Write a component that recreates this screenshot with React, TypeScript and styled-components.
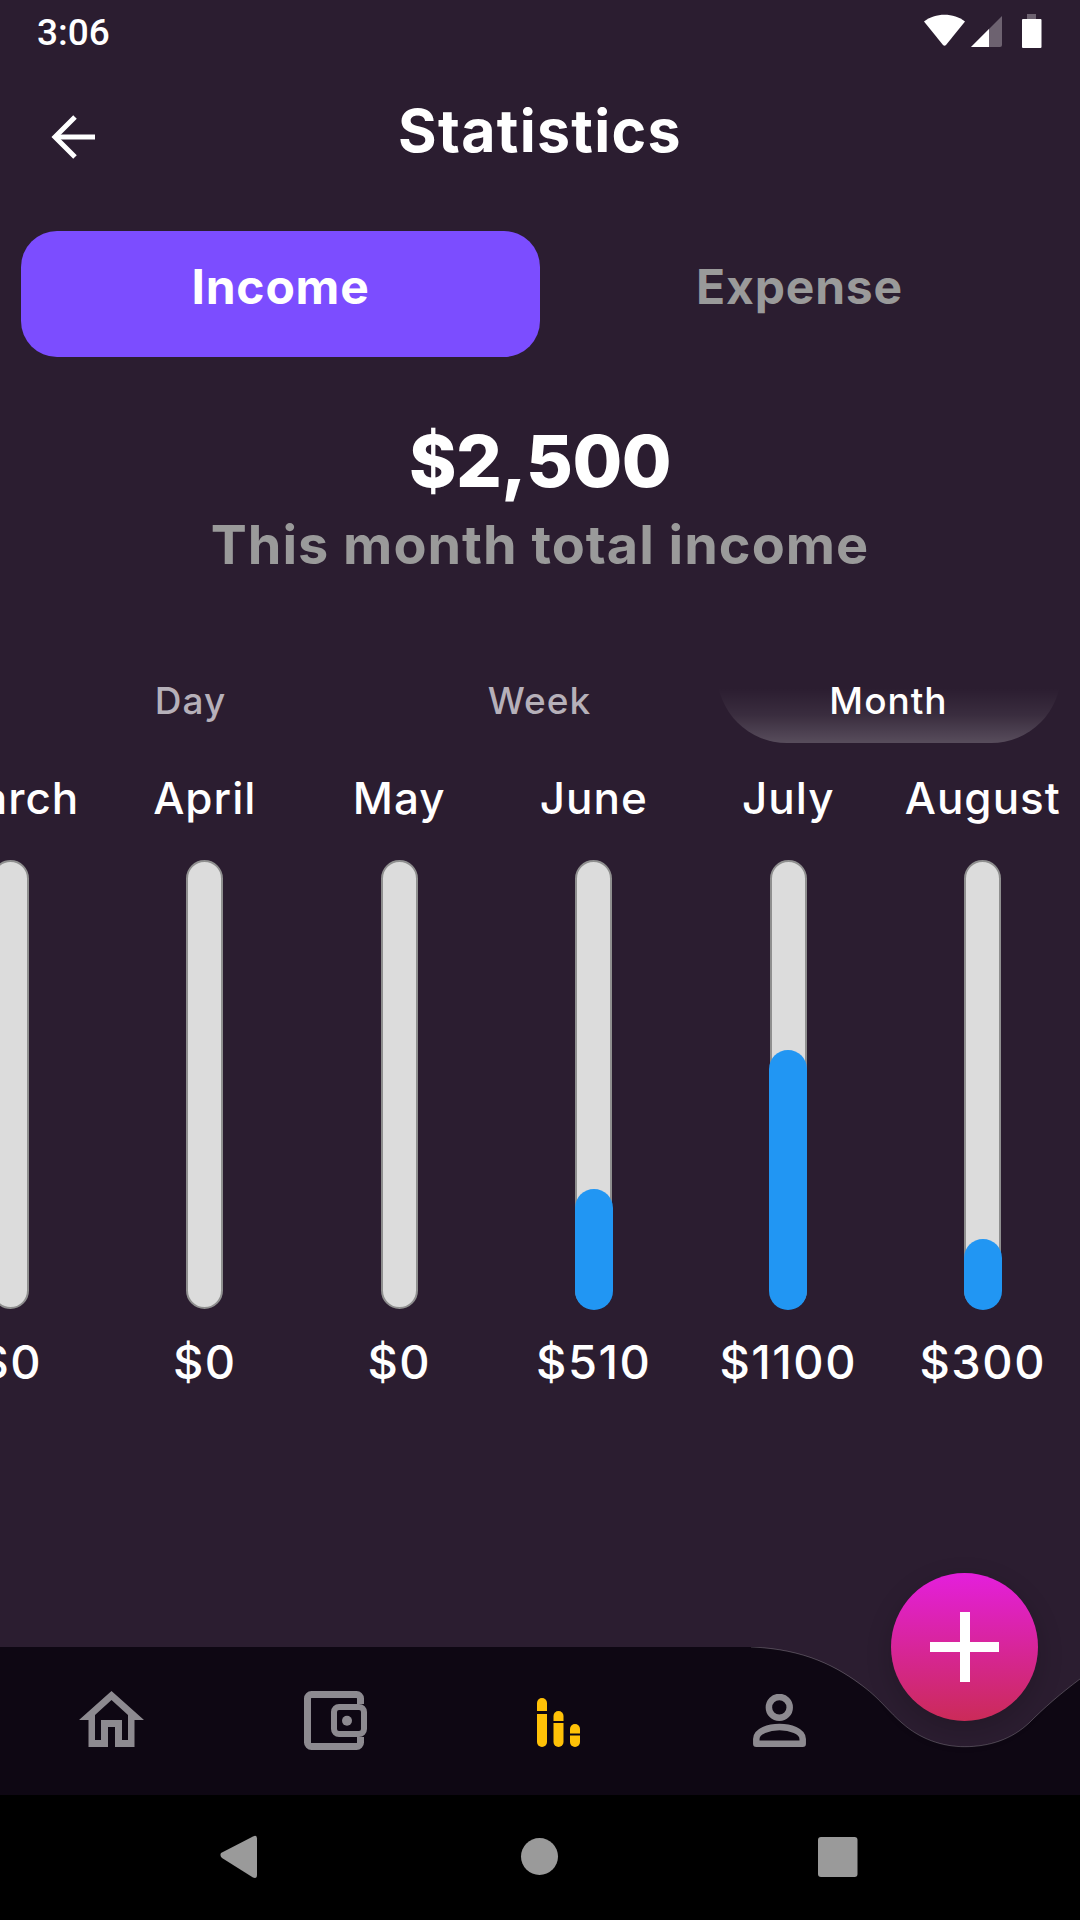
import React from "react";
import styled, { createGlobalStyle } from "styled-components";

const Global = createGlobalStyle`
  html, body { margin: 0; padding: 0; background: #2b1d30; }
  * { box-sizing: border-box; }
`;

const FONT = `Inter, "Liberation Sans", sans-serif`;

const Screen = styled.div`
  width: 1080px;
  height: 1920px;
  display: flex;
  flex-direction: column;
  position: relative;
  overflow: hidden;
  background: #2b1d30;
  font-family: ${FONT};
  color: #fff;
`;

const StatusBar = styled.div`
  height: 64px;
  flex: none;
  display: flex;
  align-items: center;
  justify-content: space-between;
  padding: 0 38px 0 37px;
`;
const Time = styled.span`
  font-family: Roboto, sans-serif;
  font-size: 37px;
  font-weight: 500;
  line-height: 64px;
  margin-top: 2px;
`;
const StatusIcons = styled.svg`
  display: block;
  width: 118px;
  height: 34px;
  margin-top: -2px;
`;

const Header = styled.header`
  height: 134px;
  flex: none;
  display: flex;
  align-items: center;
  justify-content: center;
  position: relative;
`;
const BackIcon = styled.svg`
  position: absolute;
  left: 50px;
  top: 50px;
  width: 48px;
  height: 46px;
`;
const Title = styled.h1`
  margin: 0;
  font-size: 59px;
  font-weight: 700;
  line-height: 134px;
  letter-spacing: 1.3px;
`;

const Tabs = styled.div`
  flex: none;
  margin-top: 33px;
  padding-left: 21px;
  display: flex;
`;
const Tab = styled.div<{ $active?: boolean }>`
  width: 519px;
  height: 126px;
  border-radius: 36px;
  display: flex;
  align-items: center;
  justify-content: center;
  padding-bottom: 16px;
  font-size: 48px;
  font-weight: 700;
  letter-spacing: 0.8px;
  background: ${(p) => (p.$active ? "#7c4dff" : "transparent")};
  color: ${(p) => (p.$active ? "#fff" : "#9a9a9a")};
`;

const Total = styled.div`
  flex: none;
  margin-top: 64px;
  text-align: center;
`;
const Amount = styled.div`
  font-size: 72px;
  font-weight: 800;
  line-height: 80px;
  letter-spacing: -0.5px;
`;
const Caption = styled.div`
  margin-top: 9px;
  font-size: 54px;
  font-weight: 700;
  line-height: 70px;
  color: #9a9a9a;
  letter-spacing: 1px;
`;

const Periods = styled.div`
  flex: none;
  margin-top: 93px;
  padding-left: 16px;
  display: flex;
`;
const Period = styled.div<{ $active?: boolean }>`
  width: 344px;
  height: 70px;
  display: flex;
  align-items: flex-start;
  justify-content: center;
  font-size: 37px;
  font-weight: 500;
  line-height: 56px;
  letter-spacing: 1px;
  color: ${(p) => (p.$active ? "#fff" : "#b6b0b9")};
  border-radius: 0 0 70px 70px;
  margin: 0 2.5px;
  flex: none;
  background: ${(p) =>
    p.$active
      ? "linear-gradient(180deg, rgba(255,255,255,0) 22%, rgba(255,255,255,0.07) 60%, rgba(255,255,255,0.21) 100%)"
      : "transparent"};
`;

const Chart = styled.div`
  flex: none;
  margin-top: 30px;
  margin-left: -87px;
  display: flex;
`;
const Column = styled.div`
  width: 194.5px;
  flex: none;
  display: flex;
  flex-direction: column;
  align-items: center;
`;
const Month = styled.div`
  height: 50px;
  font-size: 44px;
  font-weight: 500;
  line-height: 50px;
  letter-spacing: 1px;
  white-space: nowrap;
`;
const Track = styled.div`
  margin-top: 37px;
  width: 37px;
  height: 449px;
  border-radius: 19px;
  background: #dcdcdc;
  border: 2.5px solid #8f8f8f;
  position: relative;
`;
const Fill = styled.div`
  position: absolute;
  left: -2.5px;
  right: -2.5px;
  bottom: -2.5px;
  border-radius: 19px;
  background: #2196f3;
`;
const Value = styled.div`
  margin-top: 28px;
  height: 50px;
  font-size: 47px;
  font-weight: 500;
  line-height: 50px;
  letter-spacing: 1.5px;
  white-space: nowrap;
`;

const Spacer = styled.div`
  flex: 1;
`;

const BottomBar = styled.nav`
  flex: none;
  height: 148px;
  position: relative;
`;
const BarShape = styled.svg`
  position: absolute;
  left: 0;
  top: 0;
  width: 1080px;
  height: 148px;
`;
const NavItems = styled.div`
  position: relative;
  display: flex;
  align-items: flex-start;
  height: 148px;
`;
const NavSlot = styled.div<{ $w: number; $top: number }>`
  width: ${(p) => p.$w}px;
  padding-top: ${(p) => p.$top}px;
  display: flex;
  justify-content: flex-end;
  flex: none;
`;
const NavIcon = styled.svg`
  display: block;
  flex: none;
`;

const Fab = styled.button`
  position: absolute;
  left: 891px;
  top: 1573px;
  width: 147px;
  height: 148px;
  border: 0;
  padding: 0;
  border-radius: 50%;
  background: linear-gradient(180deg, #e41fdc 0%, #cb2b58 100%);
  box-shadow: 0 8px 26px rgba(0, 0, 0, 0.18);
  display: flex;
  align-items: center;
  justify-content: center;
`;

const SystemNav = styled.div`
  flex: none;
  height: 125px;
  background: #000;
  position: relative;
`;
const SystemIcons = styled.svg`
  display: block;
  width: 1080px;
  height: 125px;
`;

const months = [
  { name: "March", value: 0 },
  { name: "April", value: 0 },
  { name: "May", value: 0 },
  { name: "June", value: 510 },
  { name: "July", value: 1100 },
  { name: "August", value: 300 },
];

export default function App() {
  return (
    <Screen>
      <Global />
      <StatusBar>
        <Time>3:06</Time>
        <StatusIcons viewBox="0 0 118 34">
          <path d="M0 7.5 C11 -1.5 30 -1.5 41 7.5 L22 31 Q20.5 32.5 19 31 Z" fill="#fff" />
          <path d="M47 33 L78 2 V31 Q78 33 76 33 Z" fill="#6d6270" />
          <path d="M47 33 L65 15 V33 Z" fill="#fff" />
          <path d="M103 0 H112 V5 H103 Z" fill="#6d6270" />
          <rect x="98" y="5" width="19.5" height="29" rx="1" fill="#fff" />
        </StatusIcons>
      </StatusBar>
      <Header>
        <BackIcon viewBox="0 0 48 46" fill="none" stroke="#fff" strokeWidth="5">
          <path d="M45 23 H6" />
          <path d="M25 3 L5 23 L25 43" />
        </BackIcon>
        <Title>Statistics</Title>
      </Header>
      <Tabs>
        <Tab $active>Income</Tab>
        <Tab>Expense</Tab>
      </Tabs>
      <Total>
        <Amount>$2,500</Amount>
        <Caption>This month total income</Caption>
      </Total>
      <Periods>
        <Period>Day</Period>
        <Period>Week</Period>
        <Period $active>Month</Period>
      </Periods>
      <Chart>
        {months.map((m) => (
          <Column key={m.name}>
            <Month>{m.name}</Month>
            <Track>
              {m.value > 0 && <Fill style={{ height: `${(m.value / 1905) * 450}px` }} />}
            </Track>
            <Value>${m.value}</Value>
          </Column>
        ))}
      </Chart>
      <Spacer />
      <BottomBar>
        <BarShape viewBox="0 0 1080 148">
          <path
            d="M0 0 H751 C805 2 838 20 864 40 C880 52 890 66 902 76 C920 92 942 99.7 964.6 99.7 C990 99.7 1012 92 1029 76 C1045 60 1060 47 1080 32 V148 H0 Z"
            fill="#0e0713"
          />
          <path
            d="M751 0 C805 2 838 20 864 40 C880 52 890 66 902 76 C920 92 942 99.7 964.6 99.7 C990 99.7 1012 92 1029 76 C1045 60 1060 47 1080 32"
            fill="none"
            stroke="rgba(255,255,255,0.22)"
            strokeWidth="1"
          />
        </BarShape>
        <NavItems>
          <NavSlot $w={144} $top={44}>
            <NavIcon width="65" height="56" viewBox="0 0 65 56">
              <path
                fillRule="evenodd"
                fill="#8d8a90"
                d="M32.5 0 L65 29 H55.5 V56 H36 V36 H29 V56 H9.5 V29 H0 Z M32.5 9 L49 24 V49 H43 V29 H22 V49 H16 V24 Z"
              />
            </NavIcon>
          </NavSlot>
          <NavSlot $w={223} $top={44}>
            <NavIcon width="63" height="59" viewBox="0 0 63 59" fill="none" stroke="#8d8a90">
              <path
                strokeWidth="7"
                d="M56.5 13 V7.5 a4 4 0 0 0 -4 -4 H7.5 a4 4 0 0 0 -4 4 V51.5 a4 4 0 0 0 4 4 H52.5 a4 4 0 0 0 4 -4 V46"
              />
              <rect x="30" y="16" width="30" height="27" rx="5" strokeWidth="6" />
              <circle cx="43" cy="29.7" r="5" fill="#8d8a90" stroke="none" />
            </NavIcon>
          </NavSlot>
          <NavSlot $w={213} $top={51}>
            <NavIcon width="43" height="49" viewBox="0 0 43 49" fill="#ffc107">
              <path d="M0 5 a5 5 0 0 1 10 0 V13 H0 Z" />
              <path d="M0 16 H10 V44 a5 5 0 0 1 -10 0 Z" />
              <path d="M16.5 18 a5 5 0 0 1 10 0 V23 H16.5 Z" />
              <path d="M16.5 25 H26.5 V44 a5 5 0 0 1 -10 0 Z" />
              <path d="M33 31 a5 5 0 0 1 10 0 V35.5 H33 Z" />
              <path d="M33 37.5 H43 V44 a5 5 0 0 1 -10 0 Z" />
            </NavIcon>
          </NavSlot>
          <NavSlot $w={226} $top={47}>
            <NavIcon width="53" height="53" viewBox="0 0 53 53" fill="none" stroke="#8d8a90" strokeWidth="6.5">
              <circle cx="26.3" cy="13.4" r="10.4" />
              <path strokeLinejoin="round" d="M3.3 49.7 V45 C3.3 37 16 33 26.5 33 C37 33 49.7 37 49.7 45 V49.7 Z" />
            </NavIcon>
          </NavSlot>
        </NavItems>
      </BottomBar>
      <SystemNav>
        <SystemIcons viewBox="0 0 1080 125">
          <path
            d="M221 58 Q219.5 61 222 63 L253 82.5 Q257 84 257 80 V43.5 Q257 39.5 253 41.5 Z"
            fill="#9a9a9a"
          />
          <circle cx="539.5" cy="61.5" r="18.5" fill="#9a9a9a" />
          <rect x="818" y="42" width="39.5" height="40" rx="3" fill="#9a9a9a" />
        </SystemIcons>
      </SystemNav>
      <Fab aria-label="Add">
        <svg width="69" height="70" viewBox="0 0 69 70" fill="#fff">
          <rect x="30" y="0" width="10" height="70" />
          <rect x="0" y="30" width="69" height="10" />
        </svg>
      </Fab>
    </Screen>
  );
}
